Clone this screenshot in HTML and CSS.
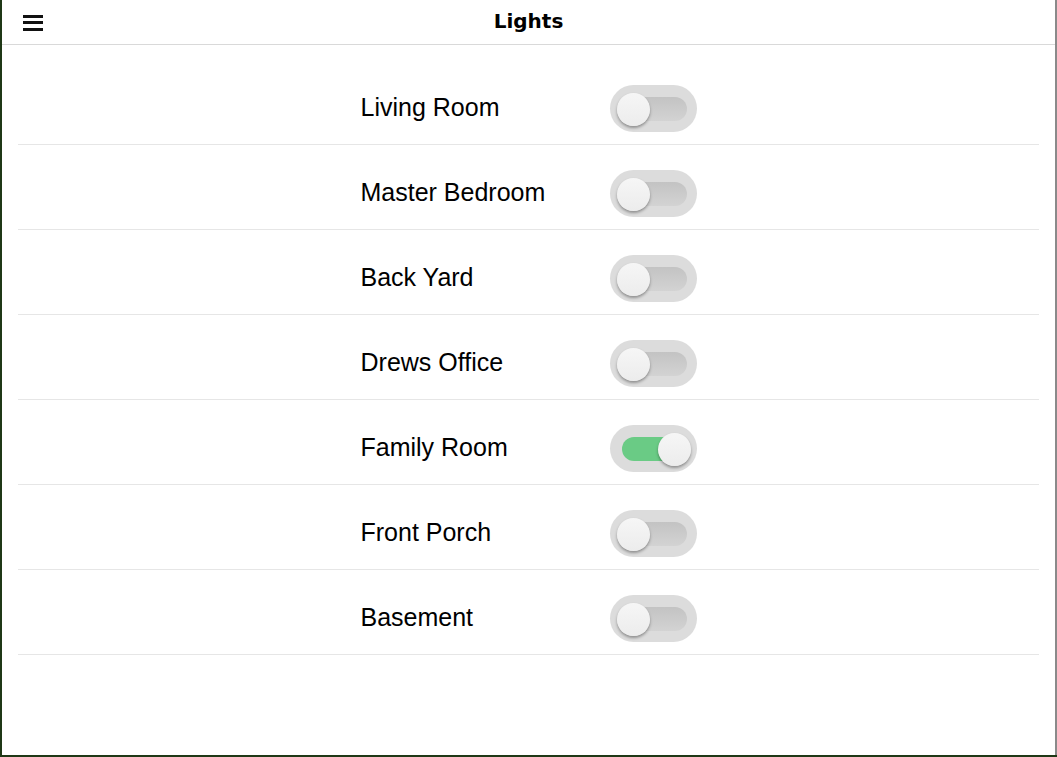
FILE: index.html
```html
<!DOCTYPE html>
<html>
<head>
<meta charset="utf-8">
<link rel="stylesheet" href="styles.css">
</head>
<body>
<div class="window">
  <header class="bar">
    <div class="menu" aria-label="menu"><span></span><span></span><span></span></div>
    <h1 class="title">Lights</h1>
    <div class="spacer"></div>
  </header>
  <ul class="list">
    <li class="row"><div class="item"><span class="label">Living Room</span><span class="toggle"><span class="groove"></span><span class="knob"></span></span></div></li>
    <li class="row"><div class="item"><span class="label">Master Bedroom</span><span class="toggle"><span class="groove"></span><span class="knob"></span></span></div></li>
    <li class="row"><div class="item"><span class="label">Back Yard</span><span class="toggle"><span class="groove"></span><span class="knob"></span></span></div></li>
    <li class="row"><div class="item"><span class="label">Drews Office</span><span class="toggle"><span class="groove"></span><span class="knob"></span></span></div></li>
    <li class="row"><div class="item"><span class="label">Family Room</span><span class="toggle on"><span class="groove"></span><span class="knob"></span></span></div></li>
    <li class="row"><div class="item"><span class="label">Front Porch</span><span class="toggle"><span class="groove"></span><span class="knob"></span></span></div></li>
    <li class="row"><div class="item"><span class="label">Basement</span><span class="toggle"><span class="groove"></span><span class="knob"></span></span></div></li>
  </ul>
</div>
</body>
</html>
```
FILE: styles.css
```css
html, body {
  margin: 0;
  padding: 0;
  height: 100%;
}
body {
  background: #1f3816;
  overflow: hidden;
}
.window {
  margin-left: 2px;
  width: 1053px;
  height: 755px;
  background: #ffffff;
  border-right: 2px solid #8a8a8a;
}
.bar {
  height: 44px;
  border-bottom: 1px solid #d9d9d9;
  display: grid;
  grid-template-columns: 1fr auto 1fr;
  align-items: center;
}
.menu {
  display: flex;
  flex-direction: column;
  gap: 3.5px;
  padding-left: 21px;
  padding-top: 1px;
}
.menu span {
  display: block;
  width: 20px;
  height: 3px;
  background: #111;
}
.title {
  margin: 0;
  font-family: "DejaVu Sans", sans-serif;
  font-weight: bold;
  font-size: 20px;
  color: #000;
  line-height: 1;
  padding-bottom: 2px;
}
.list {
  list-style: none;
  margin: 0;
  padding: 15px 16px 0;
}
.row {
  box-sizing: border-box;
  height: 85px;
  padding-top: 12px;
  border-bottom: 1px solid #e6e6e6;
  display: flex;
  justify-content: center;
  align-items: center;
}
.item {
  display: flex;
  align-items: center;
}
.label {
  width: 249px;
  font-family: "Liberation Sans", Arial, sans-serif;
  font-size: 25px;
  color: #000;
  margin-top: -2px;
}
.toggle {
  position: relative;
  display: block;
  width: 87px;
  height: 47px;
  border-radius: 24px;
  background: #dcdcdc;
}
.groove {
  position: absolute;
  left: 12px;
  top: 12px;
  width: 65px;
  height: 24px;
  border-radius: 12px;
  background: linear-gradient(to bottom, #c3c3c3, #d3d3d3);
}
.knob {
  position: absolute;
  left: 7px;
  top: 8px;
  width: 33px;
  height: 33px;
  border-radius: 50%;
  background: linear-gradient(to bottom, #f6f6f6, #ececec);
  box-shadow: 0 2px 3px rgba(0, 0, 0, 0.35);
}
.toggle.on .groove {
  background: #6acb85;
}
.toggle.on .knob {
  left: 48px;
}
```
